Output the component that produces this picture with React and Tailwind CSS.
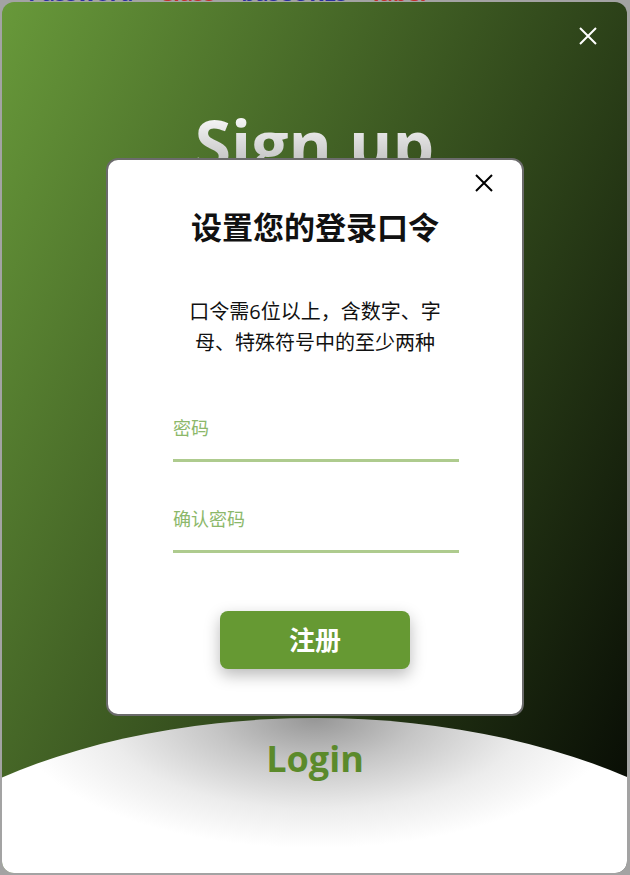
import React from "react";

// 关闭图标（两条交叉线）
const CloseIcon = ({ className }) => (
  <svg viewBox="0 0 18 18" className={className} fill="none" stroke="currentColor" strokeWidth="2">
    <path d="M1 1L17 17M17 1L1 17" />
  </svg>
);

export default function App() {
  return (
    <div className="relative w-[630px] h-[875px] overflow-hidden bg-[#a3a3a3] font-['Open_Sans','Noto_Sans_CJK_SC',sans-serif]">
      {/* page behind the dialog, only its edge shows */}
      <div className="absolute top-[-21px] left-[28px] flex gap-[26px] text-[22px] leading-[26px] font-bold whitespace-nowrap">
        <span className="text-[#2b2f9e]">Password</span>
        <span className="text-[#c23030]">Class</span>
        <span className="text-[#2b2f9e]">baseURLs</span>
        <span className="text-[#c23030]">label</span>
      </div>

      <div className="relative m-[2px] h-[871px] w-[625px] rounded-[12px] overflow-hidden bg-[linear-gradient(115deg,#68993a,#050803)]">
        <button className="absolute right-[30px] top-[25px] text-white">
          <CloseIcon className="w-[18px] h-[18px]" />
        </button>

        <div className="flex justify-center pt-[108px]">
          <h1 className="text-[66px] leading-none font-bold bg-linear-to-b from-white to-[#b5b5b5] bg-clip-text text-transparent">
            Sign up
          </h1>
        </div>

        {/* login panel at the bottom */}
        <div className="absolute left-[-187px] top-[716px] w-[1000px] h-[540px] rounded-[50%] bg-[radial-gradient(ellipse_300px_130px_at_50%_0%,#969696_0%,#c6c6c6_35%,#ececec_70%,#ffffff_100%)]">
          <div className="flex justify-center pt-[23px]">
            <span className="text-[36px] leading-none font-bold text-[#5b8a2b]">Login</span>
          </div>
        </div>

        {/* 口令设置弹窗 */}
        <div className="absolute left-[104px] top-[156px] w-[418px] h-[558px] rounded-[12px] bg-white border-2 border-[#6b6b6b] flex flex-col items-center">
          <button className="absolute right-[29px] top-[14px] text-black">
            <CloseIcon className="w-[18px] h-[18px]" />
          </button>

          <h2 className="mt-[49px] text-[31px] leading-[36px] font-bold text-[#111]">设置您的登录口令</h2>

          <p className="mt-[51px] w-[262px] text-center text-[20px] leading-[31px] text-[#111]">
            口令需6位以上，含数字、字母、特殊符号中的至少两种
          </p>

          <input
            type="password"
            placeholder="密码"
            className="mt-[58px] ml-[2px] w-[286px] h-[46px] pt-0 pb-[19px] text-[18px] leading-6 border-b-[3px] border-[#aecb8e] outline-none placeholder:text-[#8cb86a]"
          />
          <input
            type="password"
            placeholder="确认密码"
            className="mt-[45px] ml-[2px] w-[286px] h-[46px] pt-0 pb-[19px] text-[18px] leading-6 border-b-[3px] border-[#aecb8e] outline-none placeholder:text-[#8cb86a]"
          />

          <button className="mt-[58px] w-[190px] h-[58px] rounded-[8px] bg-[#669933] text-white text-[26px] font-bold shadow-[0_6px_16px_rgba(0,0,0,0.28)]">
            注册
          </button>
        </div>
      </div>
    </div>
  );
}
